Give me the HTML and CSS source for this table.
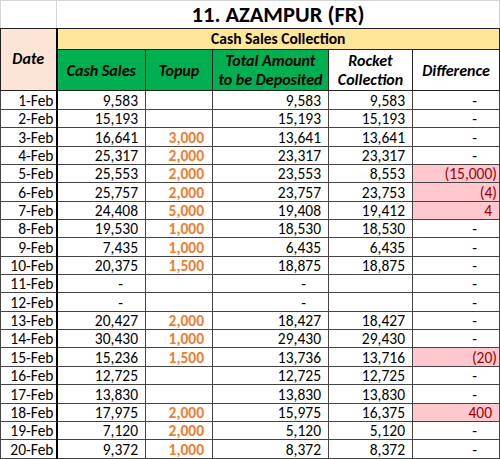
FILE: index.html
```html
<!DOCTYPE html>
<html lang="en">
<head>
    <meta charset="UTF-8">
    <title>11. AZAMPUR (FR)</title>
    <link rel="stylesheet" href="styles.css">
</head>
<body>
    <table class="sheet">
        <colgroup>
            <col class="c-date">
            <col class="c-cash">
            <col class="c-topup">
            <col class="c-total">
            <col class="c-rocket">
            <col class="c-diff">
        </colgroup>
        <thead>
            <tr class="row-title">
                <th class="blank"></th>
                <th class="title" colspan="5">11. AZAMPUR (FR)</th>
            </tr>
            <tr class="row-group">
                <th class="date-head" rowspan="2">Date</th>
                <th class="group" colspan="5">Cash Sales Collection</th>
            </tr>
            <tr class="row-head">
                <th class="green">Cash Sales</th>
                <th class="green">Topup</th>
                <th class="green">Total Amount<br>to be Deposited</th>
                <th>Rocket<br>Collection</th>
                <th>Difference</th>
            </tr>
        </thead>
        <tbody>
            <tr class="first"><td class="date">1-Feb</td><td>9,583</td><td class="topup"></td><td>9,583</td><td>9,583</td><td class="nil">-</td></tr>
            <tr><td class="date">2-Feb</td><td>15,193</td><td class="topup"></td><td>15,193</td><td>15,193</td><td class="nil">-</td></tr>
            <tr><td class="date">3-Feb</td><td>16,641</td><td class="topup">3,000</td><td>13,641</td><td>13,641</td><td class="nil">-</td></tr>
            <tr><td class="date">4-Feb</td><td>25,317</td><td class="topup">2,000</td><td>23,317</td><td>23,317</td><td class="nil">-</td></tr>
            <tr><td class="date">5-Feb</td><td>25,553</td><td class="topup">2,000</td><td>23,553</td><td>8,553</td><td class="bad neg">(15,000)</td></tr>
            <tr><td class="date">6-Feb</td><td>25,757</td><td class="topup">2,000</td><td>23,757</td><td>23,753</td><td class="bad neg">(4)</td></tr>
            <tr><td class="date">7-Feb</td><td>24,408</td><td class="topup">5,000</td><td>19,408</td><td>19,412</td><td class="bad">4</td></tr>
            <tr><td class="date">8-Feb</td><td>19,530</td><td class="topup">1,000</td><td>18,530</td><td>18,530</td><td class="nil">-</td></tr>
            <tr><td class="date">9-Feb</td><td>7,435</td><td class="topup">1,000</td><td>6,435</td><td>6,435</td><td class="nil">-</td></tr>
            <tr><td class="date">10-Feb</td><td>20,375</td><td class="topup">1,500</td><td>18,875</td><td>18,875</td><td class="nil">-</td></tr>
            <tr><td class="date">11-Feb</td><td class="nil">-</td><td class="topup"></td><td class="nil">-</td><td></td><td class="nil">-</td></tr>
            <tr><td class="date">12-Feb</td><td class="nil">-</td><td class="topup"></td><td class="nil">-</td><td></td><td class="nil">-</td></tr>
            <tr><td class="date">13-Feb</td><td>20,427</td><td class="topup">2,000</td><td>18,427</td><td>18,427</td><td class="nil">-</td></tr>
            <tr><td class="date">14-Feb</td><td>30,430</td><td class="topup">1,000</td><td>29,430</td><td>29,430</td><td class="nil">-</td></tr>
            <tr><td class="date">15-Feb</td><td>15,236</td><td class="topup">1,500</td><td>13,736</td><td>13,716</td><td class="bad neg">(20)</td></tr>
            <tr><td class="date">16-Feb</td><td>12,725</td><td class="topup"></td><td>12,725</td><td>12,725</td><td class="nil">-</td></tr>
            <tr><td class="date">17-Feb</td><td>13,830</td><td class="topup"></td><td>13,830</td><td>13,830</td><td class="nil">-</td></tr>
            <tr><td class="date">18-Feb</td><td>17,975</td><td class="topup">2,000</td><td>15,975</td><td>16,375</td><td class="bad">400</td></tr>
            <tr><td class="date">19-Feb</td><td>7,120</td><td class="topup">2,000</td><td>5,120</td><td>5,120</td><td class="nil">-</td></tr>
            <tr><td class="date">20-Feb</td><td>9,372</td><td class="topup">1,000</td><td>8,372</td><td>8,372</td><td class="nil">-</td></tr>
        </tbody>
    </table>
</body>
</html>
```

FILE: styles.css
```css
* {
    margin: 0;
    padding: 0;
    box-sizing: border-box;
}

body {
    font-family: Carlito, 'Liberation Sans', sans-serif;
    background: #fff;
    color: #000;
    width: 500px;
    height: 459px;
    overflow: hidden;
}

.sheet {
    width: 499px;
    table-layout: fixed;
    border-collapse: collapse;
    font-size: 15.5px;
}

.c-date { width: 56px; }
.c-cash { width: 89px; }
.c-topup { width: 67px; }
.c-total { width: 116px; }
.c-rocket { width: 84px; }
.c-diff { width: 87px; }

th, td {
    border: 1px solid #222;
    white-space: nowrap;
    overflow: hidden;
}

/* title row */
.row-title th {
    height: 28px;
    border-color: #d4d4d4;
    border-bottom-color: #222;
}

.title {
    font-size: 22.5px;
    font-weight: bold;
    text-align: center;
    vertical-align: bottom;
    line-height: 26px;
}

/* header rows */
.row-group th {
    height: 21px;
}

.date-head {
    background: #fce4d6;
    font-size: 16px;
    font-style: italic;
    font-weight: bold;
    border-right: 2px solid #000;
    padding-bottom: 2px;
}

.group {
    background: #ffe699;
    font-size: 15.5px;
    font-weight: bold;
    text-align: center;
    line-height: 18px;
}

.row-head th {
    height: 41px;
    font-size: 16px;
    font-style: italic;
    font-weight: bold;
    line-height: 19px;
}

.green {
    background: #00b050;
}

/* data rows */
tbody td {
    height: 18.35px;
    line-height: 17px;
    text-align: right;
    vertical-align: bottom;
    padding: 0 7px 0 0;
    border-color: #444;
}

tbody tr.first td {
    height: 19px;
}

td.date {
    padding-right: 2px;
    border-right: 2px solid #000;
}

td.topup {
    color: #ed7d31;
    font-weight: bold;
    padding-right: 8px;
}

td.nil {
    padding-right: 22px;
}

td.bad {
    background: #ffc7ce;
    color: #9c0006;
}

td.bad.neg {
    padding-right: 2px;
}
```
